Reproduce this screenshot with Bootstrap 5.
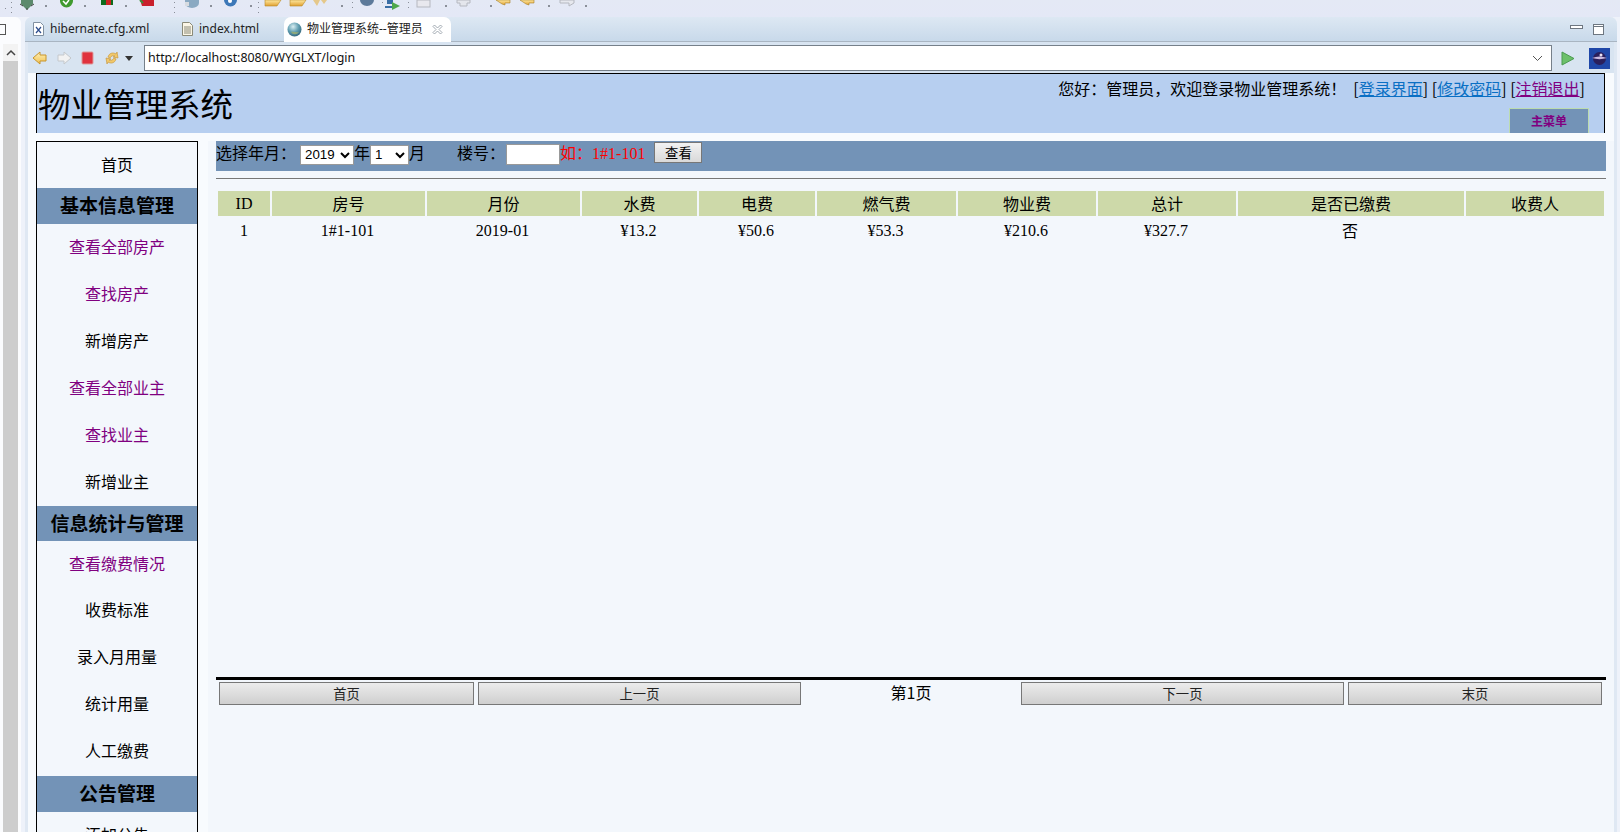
<!DOCTYPE html>
<html lang="zh">
<head>
<meta charset="utf-8">
<title>物业管理系统--管理员</title>
<link href="https://cdn.jsdelivr.net/npm/bootstrap@5.3.0/dist/css/bootstrap.min.css" rel="stylesheet">
<style>
html,body{height:832px;overflow:hidden}
body{width:1620px;background:#eef2fa;font-family:"Liberation Serif","Noto Sans CJK SC",serif;font-size:16px;color:#000;line-height:1.2}
.ide-tools{height:17px;background:linear-gradient(#e4e9f5,#e4e8f6);overflow:hidden}
.ide-tools svg{display:block}
.ide-row{height:815px}
.side-strip{width:21px;background:#fbfcfe;border-radius:0 6px 0 0}
.strip-head{height:27px;padding:7px 0 0 0}
.strip-box{width:6px;height:11px;border:1px solid #555;border-left:0}
.strip-bar{width:15px;margin-left:3px;background:#cdcdcd;flex:1}
.strip-up{height:17px;background:#f3f3f3;color:#333;display:flex;align-items:center;justify-content:center}
.ed-panel{margin-left:4px;width:1592px;background:#dfe8f3;border-radius:7px 7px 0 0}
.tab-row{height:25px;background:linear-gradient(#dde8f3,#c8d9ea);border-bottom:1px solid #a9b5c2;border-radius:7px 7px 0 0;font-family:"Noto Sans","Noto Sans CJK SC",sans-serif;font-size:12px;color:#222}
.ed-tab{height:24px;padding-left:8px;width:157px;gap:6px}
.ed-tab.idx{width:102px;padding-left:0}
.ed-tab.on{background:#fff;width:167px;height:25px;border-radius:7px 7px 0 0;padding-left:3px;gap:5px;font-size:12px}
.tab-close{margin-left:4px}
.win-btns{gap:10px;padding-right:13px}
.addr-row{height:31px;margin-left:3px;margin-right:3px;background:#d8e4f1;padding:3px 0 2px 4px}
.nav-ico{width:112px}
.addr-input{width:1408px;height:26px;background:#fff;border:1px solid #76808a;font-family:"Noto Sans",sans-serif;font-size:12.4px;color:#111;padding-left:3px}
.addr-end{margin-left:auto;gap:14px}
.web-page{margin-left:3px;margin-right:3px;background:#f8fbfe;flex:1;padding-left:8px;overflow:hidden}
.web-head{width:1569px;height:60px;background:#b7cff0;border:1px solid #000;border-width:1px 1px 0 1px}
.site-name{font-size:32.5px;font-weight:400;margin:0;line-height:38px;padding:10px 0 0 1px;font-family:"Noto Sans CJK SC",serif}
.greet{padding:2px 19px 0 0;height:34px;line-height:24px;white-space:pre}
.greet a.bl{color:#0a6fc4}
.greet a.pu{color:#800080}
.menu-tab{width:80px;height:25px;margin-right:15px;background:#7393b7;border:1px solid #bcdcb0;border-bottom:0;color:#800080;font-weight:700;font-size:12px;text-align:center;line-height:24px;font-family:"Noto Sans CJK SC",sans-serif}
.web-body{margin-top:8px}
.side-nav{width:162px;height:700px;background:#f3f7fc;border:1px solid #000;border-bottom:0;flex:none}
.side-nav a{height:47px;display:flex;align-items:center;justify-content:center;color:#000;text-decoration:none;font-family:"Noto Sans CJK SC",sans-serif;flex:none}
.side-nav a.seen{color:#800080}
.side-nav a.home-row{height:46px}
.side-nav a.short-row{height:45px}
.side-nav a.tail-row{height:49px;padding-bottom:2px}
.side-head{height:35.5px;background:#7393b7;font-weight:700;font-size:19px;display:flex;align-items:center;justify-content:center;font-family:"Noto Sans CJK SC",serif;flex:none}
.main-pane{margin-left:10px;width:1408px;height:700px;background:#f3f7fc;padding:0 0 0 8px}
.filter-bar{width:1390px;height:30px;background:#7393b7;white-space:nowrap;line-height:20px;padding-top:1px}
.filter-bar select{height:20px;font-family:"Liberation Sans",sans-serif;font-size:13.3px;padding:0;border:1px solid #999;background-color:#fff;border-radius:0}
.sel-y{width:54px;margin-left:4px}
.sel-m{width:39px}
.floor-lbl{margin-left:32px}
.floor-in{width:54px;height:21px;border:1px solid #999;background:#fff;padding:0;margin-left:1px}
.tip-red{color:#f00}
.look-btn{width:48px;height:21px;margin-left:9px;padding:0;font-size:13.3px;line-height:1;background:linear-gradient(#f2f2f2,#d9d9d9);border:1px solid #777;border-radius:0;color:#000;font-family:"Noto Sans CJK SC",sans-serif;vertical-align:top}
.thin-rule{width:1390px;height:1px;background:#777;margin:7px 0 12px}
.fee-wrap{width:1390px;height:486px;padding-left:2px}
.fee-table{width:1386px;margin:0;table-layout:fixed;--bs-table-bg:transparent;border-collapse:separate;border-spacing:0}
.fee-table th,.fee-table td{padding:0;border:0;text-align:center;font-weight:400;color:#000;box-shadow:none}
.fee-table th{height:25px;background:#cdd9a9;border-left:2px solid #f3f7fc;vertical-align:middle}
.fee-table th:first-child{border-left:0}
.fee-table td{height:30px;vertical-align:middle}
.cn{font-family:"Noto Sans CJK SC",sans-serif}
.pager-row{width:1390px;border-top:3px solid #000;padding:2px 3px 0 3px;height:30px}
.pg-btn{height:23px;padding:0;background:linear-gradient(#ececec,#cfcfcf);border:1px solid #777;border-radius:0;font-size:13.3px;line-height:1;color:#222;font-family:"Noto Sans CJK SC",sans-serif}
.pg-now{width:220px;text-align:center;line-height:20px;font-family:"Noto Sans CJK SC",sans-serif}
</style>
</head>
<body class="d-flex flex-column m-0">
<div class="ide-tools">
<svg width="1620" height="17" viewBox="0 0 1620 17">
<defs><linearGradient id="yl" x1="0" y1="0" x2="0" y2="1"><stop offset="0" stop-color="#ffe9a0"/><stop offset="1" stop-color="#e0a030"/></linearGradient></defs>
<g fill="#8a8f99"><rect x="5" y="8" width="1" height="1"/><rect x="11" y="2" width="1" height="1"/><rect x="11" y="7" width="1" height="1"/><rect x="11" y="12" width="1" height="1"/><rect x="45" y="5" width="2" height="2"/><rect x="84" y="5" width="2" height="2"/><rect x="125" y="5" width="2" height="2"/><rect x="174" y="2" width="1" height="1"/><rect x="174" y="7" width="1" height="1"/><rect x="174" y="12" width="1" height="1"/><rect x="210" y="5" width="2" height="2"/><rect x="250" y="5" width="2" height="2"/><rect x="258" y="2" width="1" height="1"/><rect x="258" y="7" width="1" height="1"/><rect x="258" y="12" width="1" height="1"/><rect x="341" y="5" width="2" height="2"/><rect x="352" y="2" width="1" height="1"/><rect x="352" y="7" width="1" height="1"/><rect x="382" y="2" width="1" height="1"/><rect x="408" y="2" width="1" height="1"/><rect x="408" y="7" width="1" height="1"/><rect x="445" y="5" width="2" height="2"/><rect x="490" y="5" width="2" height="2"/><rect x="548" y="5" width="2" height="2"/><rect x="585" y="5" width="2" height="2"/></g>
<g><path d="M21 0h12v4l-6 6-6-6z" fill="#5c8a6c"/><path d="M20 4l3 2M34 4l-3 2M27 8v2" stroke="#444" fill="none"/></g>
<path d="M60 0h13v1a6.500 6.500 0 0 1-13 0z" fill="#3f9a2e"/><path d="M63 1l3 3 3-4" stroke="#fff" stroke-width="1.500" fill="none"/>
<rect x="101" y="0" width="12" height="5" fill="#0f6b1c"/><rect x="106" y="0" width="5" height="5" fill="#c22"/>
<path d="M140 0h14v6h-12z" fill="#c9202c"/><path d="M140 0l3 3" stroke="#3d8c3a" stroke-width="2"/>
<path d="M185 0h14v3a7 5 0 0 1-14 0z" fill="#8aa9c2"/><rect x="185" y="2" width="4" height="4" fill="#d7dbe0"/>
<path d="M224 0h13a6.500 6.500 0 0 1-13 0z" fill="#3d78b8"/><circle cx="230" cy="1" r="2" fill="#fff"/>
<path d="M265 0h16l-4 6h-12z" fill="url(#yl)" stroke="#b8892a" stroke-width=".6"/>
<path d="M290 0h16l-4 6h-12z" fill="url(#yl)" stroke="#b8892a" stroke-width=".6"/>
<path d="M313 0h7l-3 6zM321 0h6l-3 4z" fill="#e5c88a"/>
<path d="M360 0h14a7 6 0 0 1-14 0z" fill="#5d7a9a"/>
<path d="M387 0h6v4h-6z" fill="#3a6ea5"/><path d="M392 2l8 4-8 4z" fill="#4fa84a"/><rect x="385" y="6" width="7" height="2" fill="#3a6ea5"/>
<rect x="417" y="0" width="13" height="7" fill="#e8e8ee" stroke="#b5b8c0"/>
<path d="M457 0h13v3h-3v3h-7V3h-3z" fill="#e4e6ec" stroke="#b5b8c0"/>
<path d="M496 0h14v3h-5v2l-3-1z" fill="url(#yl)" stroke="#a8822a" stroke-width=".6"/>
<path d="M520 0h14v3h-5v2l-3-1z" fill="url(#yl)" stroke="#a8822a" stroke-width=".6"/>
<path d="M560 0h14v3l-5 3v-3h-9z" fill="#e6e8ee" stroke="#b5b8c0"/>
</svg>
</div>
<div class="ide-row d-flex">
  <div class="side-strip d-flex flex-column">
    <div class="strip-head"><div class="strip-box"></div></div>
    <div class="strip-bar d-flex flex-column"><div class="strip-up"><svg width="10" height="7" viewBox="0 0 10 7"><path d="M1 6l4-4 4 4" stroke="#444" stroke-width="1.500" fill="none"/></svg></div></div>
  </div>
  <div class="ed-panel d-flex flex-column">
    <div class="tab-row d-flex align-items-center">
      <div class="ed-tab d-flex align-items-center">
        <svg width="11" height="14" viewBox="0 0 11 14"><path d="M.5.500h7l3 3v10H.5z" fill="#fff" stroke="#8090a0"/><path d="M3 5l5 6M8 5l-5 6" stroke="#2b4c8c" stroke-width="1.200"/></svg>
        <span>hibernate.cfg.xml</span>
      </div>
      <div class="ed-tab idx d-flex align-items-center">
        <svg width="11" height="14" viewBox="0 0 11 14"><path d="M.5.500h7l3 3v10H.5z" fill="#fbf6e6" stroke="#8a8a78"/><path d="M2 5h7M2 7h7M2 9h7M2 11h7" stroke="#8a8a78"/></svg>
        <span>index.html</span>
      </div>
      <div class="ed-tab on d-flex align-items-center">
        <svg width="15" height="15" viewBox="0 0 15 15"><defs><radialGradient id="gb" cx=".4" cy=".3" r=".8"><stop offset="0" stop-color="#d9eef2"/><stop offset=".5" stop-color="#5f9db0"/><stop offset="1" stop-color="#2a5a70"/></radialGradient></defs><circle cx="7.500" cy="7.500" r="7" fill="url(#gb)"/><path d="M4 10c3-1 5 1 8 0-2 3-6 3-8 0z" fill="#8fa87a"/></svg>
        <span>物业管理系统--管理员</span>
        <svg class="tab-close" width="11" height="11" viewBox="0 0 11 11"><path d="M1 2.500L2.500 1 5.500 4 8.500 1 10 2.500 7 5.500 10 8.500 8.500 10 5.500 7 2.500 10 1 8.500 4 5.500z" fill="#fff" stroke="#8a949e" stroke-width=".8"/></svg>
      </div>
      <div class="win-btns d-flex align-items-center ms-auto">
        <svg width="13" height="10" viewBox="0 0 13 10"><rect x=".5" y="1.500" width="12" height="3" fill="#fff" stroke="#6d7680"/></svg>
        <svg width="11" height="11" viewBox="0 0 11 11"><rect x=".5" y=".5" width="10" height="10" fill="#fff" stroke="#6d7680"/><path d="M.5 2.500h10" stroke="#6d7680"/></svg>
      </div>
    </div>
    <div class="addr-row d-flex align-items-center">
      <div class="nav-ico d-flex">
        <svg width="112" height="22" viewBox="0 0 112 22">
          <defs><linearGradient id="yl2" x1="0" y1="0" x2="0" y2="1"><stop offset="0" stop-color="#fff2b8"/><stop offset="1" stop-color="#f0c050"/></linearGradient></defs>
          <path d="M1 11l7-6v3h6v6H8v3z" fill="url(#yl2)" stroke="#c8952c"/>
          <path d="M39 11l-7-6v3h-6v6h6v3z" fill="#f2f2f2" stroke="#c4c8cc"/>
          <rect x="50" y="5" width="11" height="12" rx="1" fill="#e0323e" stroke="#d99"/>
          <path d="M76 10c1-4 5-5 8-3l1-2 1 6-5-1 2-1c-2-1-4 0-5 2z" fill="#f2c868" stroke="#c89a40" stroke-width=".7"/>
          <path d="M84 12c-1 4-5 5-8 3l-1 2-1-6 5 1-2 1c2 1 4 0 5-2z" fill="#f2c868" stroke="#c89a40" stroke-width=".7"/>
          <path d="M93 9h8l-4 5z" fill="#333"/>
        </svg>
      </div>
      <div class="addr-input d-flex align-items-center justify-content-between">
        <span>http://localhost:8080/WYGLXT/login</span>
        <svg class="me-2" width="11" height="7" viewBox="0 0 11 7"><path d="M1 1l4.500 4.500L10 1" stroke="#555" fill="none"/></svg>
      </div>
      <div class="addr-end d-flex align-items-center pe-1">
        <svg width="14" height="15" viewBox="0 0 14 15"><path d="M1 1l12 6.500L1 14z" fill="#6cc06a" stroke="#4a9a50"/></svg>
        <svg width="21" height="21" viewBox="0 0 21 21"><rect width="21" height="21" fill="#1f47a8"/><circle cx="10.500" cy="10.500" r="6.500" fill="#2a1f5c"/><path d="M3 10c5-2 10-2 15 0-5 1.500-10 1.500-15 0z" fill="#c9b8e0"/><circle cx="12" cy="7" r="1.500" fill="#e8e0f4"/></svg>
      </div>
    </div>
    <div class="web-page d-flex flex-column">
      <div class="web-head d-flex justify-content-between">
        <h1 class="site-name">物业管理系统</h1>
        <div class="d-flex flex-column align-items-end">
          <div class="greet cn">您好：管理员，欢迎登录物业管理系统！  [<a class="bl" href="#">登录界面</a>] [<a class="bl" href="#">修改密码</a>] [<a class="pu" href="#">注销退出</a>]</div>
          <div class="menu-tab">主菜单</div>
        </div>
      </div>
      <div class="web-body d-flex">
        <nav class="side-nav d-flex flex-column overflow-hidden">
          <a class="home-row" href="#">首页</a>
          <div class="side-head">基本信息管理</div>
          <a class="seen" href="#">查看全部房产</a>
          <a class="seen" href="#">查找房产</a>
          <a href="#">新增房产</a>
          <a class="seen" href="#">查看全部业主</a>
          <a class="seen" href="#">查找业主</a>
          <a href="#">新增业主</a>
          <div class="side-head">信息统计与管理</div>
          <a class="seen short-row" href="#">查看缴费情况</a>
          <a href="#">收费标准</a>
          <a href="#">录入月用量</a>
          <a href="#">统计用量</a>
          <a class="tail-row" href="#">人工缴费</a>
          <div class="side-head">公告管理</div>
          <a href="#">添加公告</a>
        </nav>
        <div class="main-pane">
          <div class="filter-bar"><span class="cn">选择年月：</span><select class="sel-y"><option>2019</option></select><span class="cn">年</span><select class="sel-m"><option>1</option></select><span class="cn">月</span><span class="cn floor-lbl">楼号：</span><input class="floor-in" type="text"><span class="tip-red"><span class="cn">如：</span>1#1-101</span><button class="btn look-btn" type="button">查看</button></div>
          <div class="thin-rule"></div>
          <div class="fee-wrap">
            <table class="table fee-table">
              <colgroup><col style="width:52px"><col style="width:155px"><col style="width:155px"><col style="width:117px"><col style="width:118px"><col style="width:141px"><col style="width:140px"><col style="width:140px"><col style="width:228px"><col style="width:140px"></colgroup>
              <thead><tr><th>ID</th><th class="cn">房号</th><th class="cn">月份</th><th class="cn">水费</th><th class="cn">电费</th><th class="cn">燃气费</th><th class="cn">物业费</th><th class="cn">总计</th><th class="cn">是否已缴费</th><th class="cn">收费人</th></tr></thead>
              <tbody><tr><td>1</td><td>1#1-101</td><td>2019-01</td><td>¥13.2</td><td>¥50.6</td><td>¥53.3</td><td>¥210.6</td><td>¥327.7</td><td class="cn">否</td><td></td></tr></tbody>
            </table>
          </div>
          <div class="pager-row d-flex align-items-start">
            <button class="btn pg-btn" style="width:255px" type="button">首页</button>
            <button class="btn pg-btn ms-1" style="width:323px" type="button">上一页</button>
            <div class="pg-now">第1页</div>
            <button class="btn pg-btn" style="width:323px" type="button">下一页</button>
            <button class="btn pg-btn ms-1" style="width:254px" type="button">末页</button>
          </div>
        </div>
      </div>
    </div>
  </div>
</div>
<script src="https://cdn.jsdelivr.net/npm/bootstrap@5.3.0/dist/js/bootstrap.bundle.min.js"></script>
</body>
</html>
